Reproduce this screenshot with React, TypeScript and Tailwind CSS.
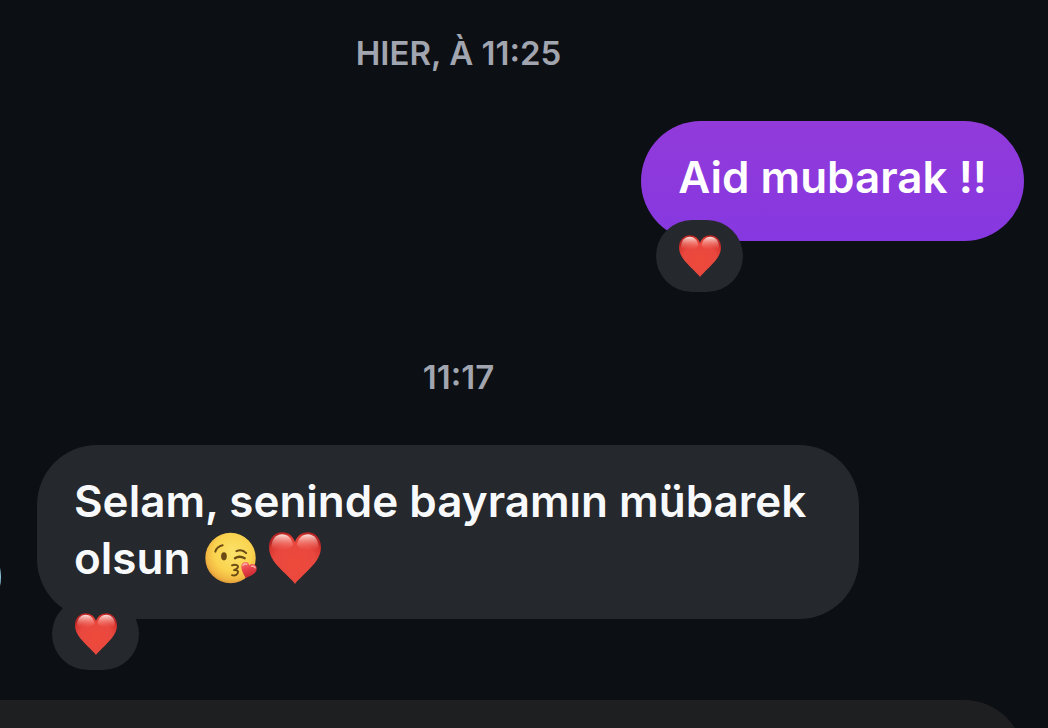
import React, { useId } from 'react';
import { clsx } from 'clsx';

function HeartEmoji({ className }: { className?: string }) {
    const id = useId();

    return (
        <svg viewBox="0 0 52 52" className={className} role="img" aria-label="heart">
            <defs>
                <radialGradient id={`${id}-fill`} cx="0.5" cy="0.62" r="0.62">
                    <stop offset="0" stopColor="#ee4a3b" />
                    <stop offset="0.65" stopColor="#e9483f" />
                    <stop offset="0.9" stopColor="#d9372f" />
                    <stop offset="1" stopColor="#b92424" />
                </radialGradient>
                <linearGradient id={`${id}-shine`} x1="0" y1="0" x2="0" y2="1">
                    <stop offset="0" stopColor="#ffe9e4" stopOpacity="0.95" />
                    <stop offset="0.4" stopColor="#ffb9b0" stopOpacity="0.6" />
                    <stop offset="1" stopColor="#f8776b" stopOpacity="0" />
                </linearGradient>
            </defs>
            <path
                fill={`url(#${id}-fill)`}
                d="M26 52C24.500 49.500 20 45.500 15 40.500C7 32.500 0 25.500 0 15C0 6.200 6 0.300 13.500 0.300C19.500 0.300 24 4 26 10C28 4 32.500 0.300 38.500 0.300C46 0.300 52 6.200 52 15C52 25.500 45 32.500 37 40.500C32 45.500 27.500 49.500 26 52Z"
            />
            <path
                fill={`url(#${id}-shine)`}
                d="M2.500 15C2.500 7.500 7 2.300 13.200 2.300C18.800 2.300 22.500 6 24 12.500C23 16.500 18 18 13 18C8 18 4 17.500 2.500 15Z"
            />
            <path
                fill={`url(#${id}-shine)`}
                d="M49.500 15C49.500 7.500 45 2.300 38.800 2.300C33.200 2.300 29.500 6 28 12.500C29 16.500 34 18 39 18C44 18 48 17.500 49.500 15Z"
            />
        </svg>
    );
}

function KissEmoji({ className }: { className?: string }) {
    const id = useId();

    return (
        <svg viewBox="0 0 53 52" className={className} role="img" aria-label="face blowing a kiss">
            <defs>
                <radialGradient id={`${id}-face`} cx="0.55" cy="0.4" r="0.62">
                    <stop offset="0" stopColor="#fbe36a" />
                    <stop offset="0.6" stopColor="#fad34f" />
                    <stop offset="0.85" stopColor="#f2b843" />
                    <stop offset="1" stopColor="#dc9838" />
                </radialGradient>
                <linearGradient id={`${id}-heart`} x1="0" y1="0" x2="0.3" y2="1">
                    <stop offset="0" stopColor="#f97a72" />
                    <stop offset="0.5" stopColor="#e9434a" />
                    <stop offset="1" stopColor="#c92a30" />
                </linearGradient>
            </defs>
            <circle cx="26" cy="26" r="25.700" fill={`url(#${id}-face)`} />
            <g fill="none" stroke="#6b4a14" strokeLinecap="round" strokeLinejoin="round">
                <path strokeWidth="2" d="M10.500 19.500C11.500 16.200 14 13.800 18 13" />
                <path strokeWidth="2" d="M32 19C35.500 17.500 39.500 18.300 42 21" />
                <path strokeWidth="2.300" d="M30.500 26.200C33.500 24.300 37 24.300 40.500 26.200" />
                <path strokeWidth="1.900" d="M27.500 33.500C31 32 35 33.500 33.300 36C32.500 37.200 31 37.900 29.500 38.300C32.800 38 34.700 39.500 33.200 41.700C31.800 43.700 29.500 44.200 27.500 43.500" />
            </g>
            <ellipse cx="19.300" cy="24.300" rx="2.900" ry="4.200" fill="#6b4a14" />
            <path
                fill={`url(#${id}-heart)`}
                d="M41.500 46.500C40 43.500 37.200 39.500 37 35.500C36.800 31.500 39 29.800 41.500 30C43.500 30.200 44.800 31.500 45.200 33.500C46.800 32 49 31.700 50.700 33C53.500 35.200 53.300 39 50.500 41.500C48 43.800 44.500 44.800 41.500 46.500Z"
            />
            <path
                fill="none"
                stroke="#ffb3ab"
                strokeWidth="1.500"
                strokeLinecap="round"
                d="M38.800 33.500C39.300 32 41 31.500 42.500 32.500M47.500 34.500C49 33.800 50.500 34.700 51 36"
            />
        </svg>
    );
}

function TimeLabel({ children }: { children: React.ReactNode }) {
    return (
        <time className="block pr-[131px] text-center text-[33px] leading-10 font-semibold text-[#a1a5b0]">
            {children}
        </time>
    );
}

function Bubble({ own, children }: { own?: boolean; children: React.ReactNode }) {
    return (
        <div
            className={clsx(
                'relative min-h-[120px] max-w-[822px] rounded-[60px] px-[37px] pt-7 pb-8 text-[44px] leading-[57px] font-semibold',
                own ? 'bg-linear-to-b from-[#923ada] to-[#8638e0] text-white' : 'bg-[#25282c] text-[#f8f9fa]'
            )}
        >
            <p>{children}</p>
            <button
                type="button"
                aria-label="Reaction"
                className="absolute -bottom-[51px] left-[15px] flex h-[72px] w-[87px] items-center justify-center rounded-full bg-[#25282c]"
            >
                <HeartEmoji className="size-[42px]" />
            </button>
        </div>
    );
}

export default function App() {
    return (
        <main className="flex h-screen flex-col overflow-hidden bg-[#0c0f13] pt-[33px] font-['Inter',sans-serif]">
            <section className="shrink-0">
                <TimeLabel>HIER, À 11:25</TimeLabel>
                <div className="mt-12 flex justify-end pr-6">
                    <Bubble own>Aid mubarak !!</Bubble>
                </div>
            </section>

            <section className="mt-[116px] shrink-0">
                <TimeLabel>11:17</TimeLabel>
                <div className="mt-12 flex items-end gap-9">
                    {/* avatar is mostly scrolled past the left edge */}
                    <div className="-ml-[83px] size-[84px] shrink-0 rounded-full bg-[#8ec5df]" />
                    <Bubble>
                        Selam, seninde bayramın mübarek olsun{' '}
                        <span className="inline-flex gap-3 px-1 align-[-10px]">
                            <KissEmoji className="size-[52px]" />
                            <HeartEmoji className="size-[52px]" />
                        </span>
                    </Bubble>
                </div>
            </section>

            <div className="mt-[81px] mr-6 h-[120px] shrink-0 rounded-tr-[60px] bg-[#1e1f20]" />
        </main>
    );
}
